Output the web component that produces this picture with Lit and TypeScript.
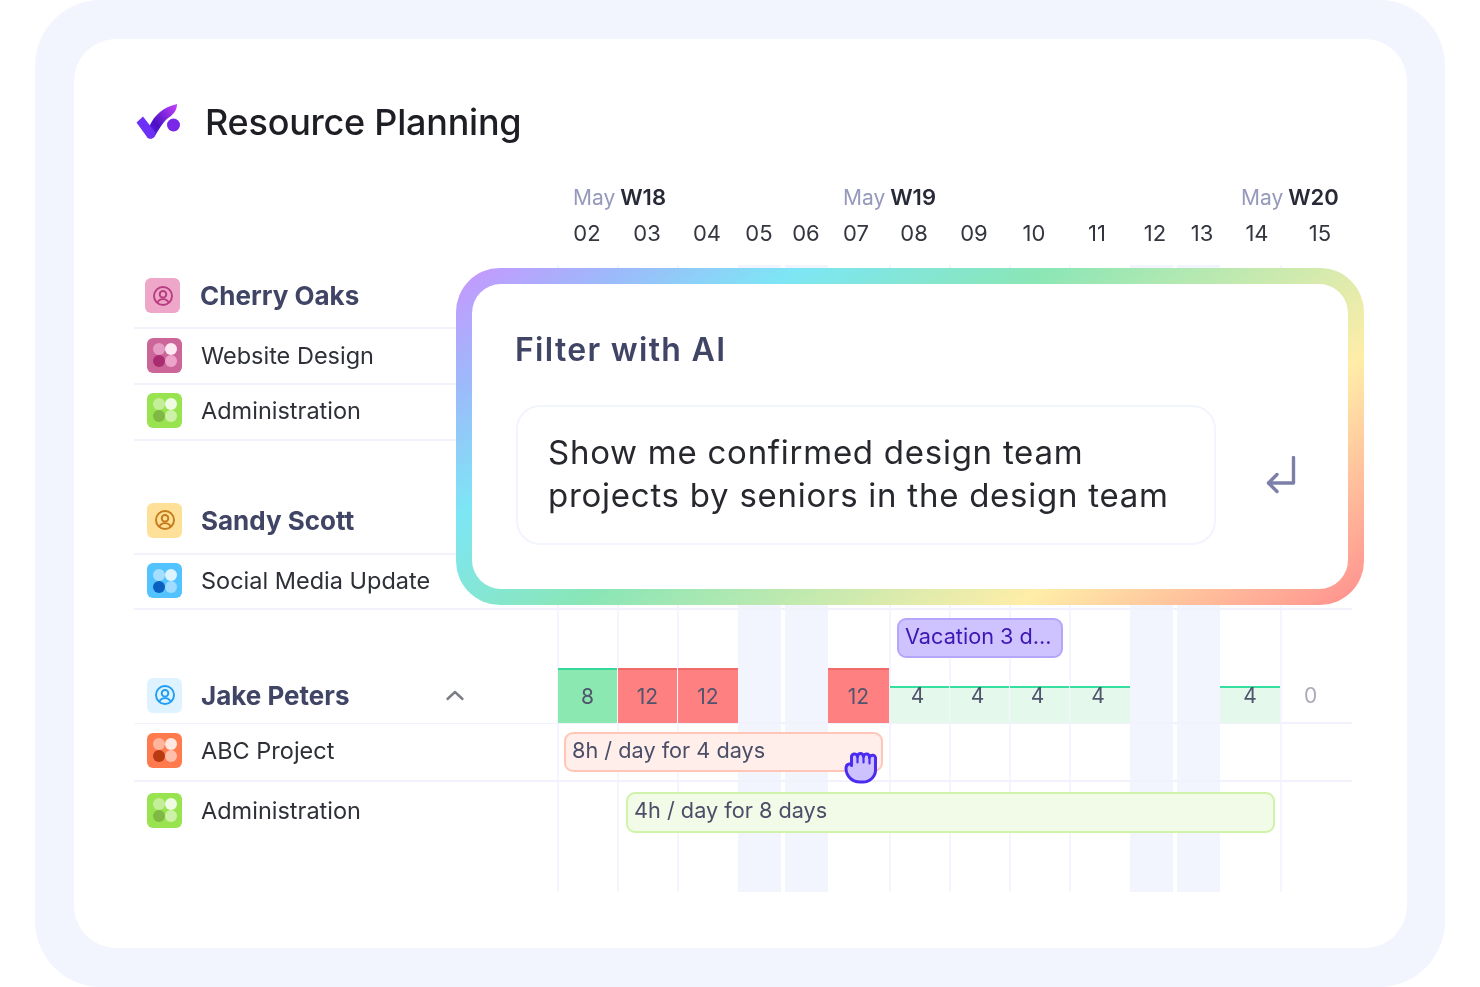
import { LitElement, html, css, svg } from "lit";
import { customElement } from "lit/decorators.js";

const dates: [string, number][] = [
  ["02", 60], ["03", 60], ["04", 60], ["05", 44], ["06", 50], ["07", 50], ["08", 66],
  ["09", 54], ["10", 66], ["11", 60], ["12", 56], ["13", 38], ["14", 72], ["15", 54],
];
const lineTracks = [2, 3, 4, 9, 10, 11, 12, 17];
const weekendTracks = [5, 7, 13, 15];

const person = (c: string) => html`<span class="ic person ${c}"><svg viewBox="0 0 24 24" width="24" height="24" fill="none" stroke="currentColor" stroke-width="1.9"><circle cx="12" cy="12" r="9"/><circle cx="12" cy="10.3" r="3.3"/><path d="M6.3 18.6c1.2-2.4 3.2-3.5 5.7-3.5s4.500 1.100 5.700 3.500"/></svg></span>`;
const project = (c: string) => html`<span class="ic project ${c}"><i></i><i></i><i></i><i></i></span>`;

const handPath = svg`<path d="M851.500 765.500V757.500a3 3 0 0 1 6-1a3 3 0 0 1 6 0a3 3 0 0 1 6 1a3 3 0 0 1 6 1.500V770a12.500 12 0 0 1-12.500 12h-3a14 13.500 0 0 1-14-13.500q0-4 3-4.500q2-.3 2.500.5z" fill="#CDC2FF" stroke="#4B2BF0" stroke-width="3" stroke-linejoin="round"/><path d="M857.500 756.500v6M863.500 756.500v6M869.500 757.500v6" fill="none" stroke="#4B2BF0" stroke-width="2.200" stroke-linecap="round"/>`;

@customElement("app-root")
export class AppRoot extends LitElement {
  static styles = css`
    :host { display: block; width: 1480px; height: 987px; overflow: hidden; background: #fff;
      font-family: Inter, "Liberation Sans", sans-serif;
      --tracks: 423px 60px 60px 61px 43px 4px 43px 61px 60px 60px 60px 61px 43px 4px 43px 60px 72px; }
    .frame { box-sizing: border-box; margin: 0 35px; height: 987px; padding: 39px 38px 39px 39px; background: #F2F4FE; border-radius: 66px; filter: blur(.35px); }
    .card { position: relative; box-sizing: border-box; height: 909px; background: #fff; border-radius: 42px; padding: 60px 55px 0 60px; }
    .title { display: flex; align-items: center; gap: 24px; height: 46px; padding-left: 1px; }
    .title svg { flex: none; }
    h1 { margin: 0; font-size: 36px; font-weight: 550; color: #1d1f24; letter-spacing: -0.24px; }
    .weeks { display: grid; grid-template-columns: var(--tracks); height: 37px; padding-bottom: 1px; margin-top: 33px; align-items: center; font-size: 21px; }
    .wk { white-space: nowrap; color: #9599BB; }
    .wk b { font-size: 22px; font-weight: 600; color: #272a36; margin-left: -1px; }
    .w18 { grid-column: 2 / span 4; padding-left: 16px; }
    .w19 { grid-column: 8 / span 4; padding-left: 15px; }
    .w20 { grid-column: 16 / span 2; padding-left: 21px; }
    .dates { display: flex; height: 34px; align-items: center; padding-left: 423px; font-size: 22px; color: #33363f; }
    .dates span { text-align: center; flex: none; }
    .body { display: grid; height: 627px; margin-top: 15px; }
    .cols, .rows { grid-area: 1 / 1; display: grid; grid-template-columns: var(--tracks); }
    .rows { display: block; }
    .col { grid-row: 1; }
    .line { border-left: 2px solid #F4F5FE; }
    .weekend { background: #F2F4FE; }
    .row { display: grid; grid-template-columns: var(--tracks); box-sizing: border-box; border-bottom: 2px solid #F1F2FC; position: relative; }
    .h64 { height: 64px; } .h56 { height: 56px; } .h55 { height: 55px; } .h58 { height: 58px; }
    .none { border-bottom: none; }
    .sp50 { height: 50px; }
    .label { grid-column: 1; grid-row: 1; display: flex; align-items: center; gap: 19px; padding: 0 0 2px 13px; font-size: 23.500px; color: #2e3038; white-space: nowrap; background: #fff; }
    .label.low1 { padding-bottom: 1px; }
    .label.up { padding-bottom: 4px; }
    .label.tight { padding-left: 11px; gap: 20px; }
    .label b { font-size: 26px; font-weight: 650; color: #404565; }
    .ic { flex: none; width: 35px; height: 35px; border-radius: 6px; box-sizing: border-box; }
    .person { display: flex; align-items: center; justify-content: center; }
    .p-pink { background: #EEA7C8; color: #B83C80; }
    .p-amber { background: #FFE099; color: #C67A18; }
    .p-blue { background: #DEF3FF; color: #1F9DF2; }
    .project { display: grid; grid-template-columns: 1fr 1fr; gap: 0; padding: 5.500px; }
    .project i { border-radius: 50%; }
    .c-rose { background: #CC6699; } .c-rose i:nth-child(1){background:#E59BC2} .c-rose i:nth-child(2){background:#FFEAF3} .c-rose i:nth-child(3){background:#A92B70} .c-rose i:nth-child(4){background:#EDA4CA}
    .c-green { background: #99E350; } .c-green i:nth-child(1){background:#C4EF9A} .c-green i:nth-child(2){background:#EFFBE2} .c-green i:nth-child(3){background:#7FB844} .c-green i:nth-child(4){background:#CDF2A7}
    .c-sky { background: #52C3FF; } .c-sky i:nth-child(1){background:#A5DFFF} .c-sky i:nth-child(2){background:#DDF3FF} .c-sky i:nth-child(3){background:#0A5FBF} .c-sky i:nth-child(4){background:#A0DCFF}
    .c-orange { background: #FF7A4D; } .c-orange i:nth-child(1){background:#FFB49C} .c-orange i:nth-child(2){background:#FFE8E0} .c-orange i:nth-child(3){background:#B83A10} .c-orange i:nth-child(4){background:#FFBFAA}
    .chev { margin-left: auto; margin-right: 92px; flex: none; }
    .cell { grid-row: 1; display: flex; align-items: center; justify-content: center; box-sizing: border-box; font-size: 21px; color: #50546c; margin-left: 1px; height: 55px; padding-bottom: 1px; }
    .ok { background: #8AE8B0; border-top: 2px solid #35D79A; }
    .over { background: #FF8080; border-top: 2px solid #F06A6A; }
    .over.flush { margin-left: 0; }
    .low { padding: 0 4px 0 0; background: linear-gradient(#fff0 18px, #35DFA0 18px, #35DFA0 20px, #E4F8EC 20px); }
    .low.tail { margin-left: 0; padding-right: 0; }
    .zero { color: #a9acb8; padding: 0 12px 0 0; }
    .pill { grid-row: 1; box-sizing: border-box; display: flex; align-items: center; height: 40px; border: 2px solid; border-radius: 9px; padding: 0 0 3px 6px; font-size: 21.700px; white-space: nowrap; color: #4a4e68; align-self: center; }
    .vac { grid-column: 9 / span 3; width: 166px; margin-left: 8px; background: #CFC3FF; border-color: #B6A6FB; color: #3D17B3; align-self: start; margin-top: 8px; padding-bottom: 4px; }
    .red { grid-column: 2 / span 7; margin: -1px 6px 0 7px; background: #FFEEEA; border-color: #FFC6B7; }
    .lime { grid-column: 3 / span 14; margin: 2px 5px 0 9px; background: #F1FBE7; border-color: #CFF3A8; height: 41px; padding-bottom: 4px; }
    .hand { position: absolute; left: 706px; top: 21px; }
    .panel { position: absolute; left: 382px; top: 229px; width: 908px; height: 337px; box-sizing: border-box; padding: 16px; border-radius: 44px;
      background: linear-gradient(144deg, #C995FF 0%, #9DB9FA 12%, #7DE6F5 25%, #8AE6B6 43%, #FFEDA8 75%, #FF8E8E 100%); }
    .inner { box-sizing: border-box; height: 100%; background: #fff; border-radius: 29px; padding: 43px 0 0 43px; }
    h2 { margin: 0; font-size: 32px; line-height: 46px; font-weight: 600; color: #404565; letter-spacing: 1.300px; }
    .ask { display: flex; align-items: center; gap: 50px; margin: 32px 0 0 1px; }
    .box { box-sizing: border-box; width: 700px; height: 140px; border: 2px solid #F2F4FE; border-radius: 24px; padding: 0 0 2px 30px; display: flex; align-items: center; font-size: 33px; line-height: 43.500px; color: #26282e; letter-spacing: 0.74px; white-space: pre-line; }
    .ret { flex: none; }
  `;

  render() {
    return html`
      <div class="frame">
        <div class="card">
          <div class="title">
            <svg width="46" height="38" viewBox="135 103 46 38">
              <defs>
                <linearGradient id="lg" x1="140" y1="136" x2="178" y2="104" gradientUnits="userSpaceOnUse">
                  <stop offset="0" stop-color="#6A2DFB"/><stop offset=".4" stop-color="#4B10C4"/><stop offset="1" stop-color="#C945FF"/>
                </linearGradient>
              </defs>
              <path d="M150 125C154 116 163 107 177 104C177 110 174 113 171 116C164 120 159 129 155 136C153 139 149 139.500 147 137Z" fill="url(#lg)"/>
              <path d="M136.500 122.500L143 116.500L155 132L155 136C153 139 149 139.500 147 137Z" fill="#6D30F6"/>
              <circle cx="173.500" cy="125" r="6.500" fill="#7A28E8"/>
            </svg>
            <h1>Resource Planning</h1>
          </div>
          <div class="weeks">
            <div class="wk w18">May <b>W18</b></div>
            <div class="wk w19">May <b>W19</b></div>
            <div class="wk w20">May <b>W20</b></div>
          </div>
          <div class="dates">
            ${dates.map(([d, w]) => html`<span style="width:${w}px">${d}</span>`)}
          </div>
          <div class="body">
            <div class="cols">
              ${lineTracks.map((t) => html`<div class="col line" style="grid-column:${t}"></div>`)}
              ${weekendTracks.map((t) => html`<div class="col weekend" style="grid-column:${t}"></div>`)}
            </div>
            <div class="rows">
              <div class="row h64"><div class="label tight low1">${person("p-pink")}<b>Cherry Oaks</b></div></div>
              <div class="row h56"><div class="label">${project("c-rose")}Website Design</div></div>
              <div class="row h56"><div class="label up">${project("c-green")}Administration</div></div>
              <div class="sp50"></div>
              <div class="row h64"><div class="label up">${person("p-amber")}<b>Sandy Scott</b></div></div>
              <div class="row h55"><div class="label">${project("c-sky")}Social Media Update</div></div>
              <div class="row h58 none"><div class="pill vac">Vacation 3 d...</div></div>
              <div class="row h56">
                <div class="label low1">${person("p-blue")}<b>Jake Peters</b>
                  <svg class="chev" width="20" height="12" viewBox="0 0 20 12" fill="none" stroke="#7b7d85" stroke-width="2.400" stroke-linecap="round" stroke-linejoin="round"><path d="M2.500 10L10 3l7.500 7"/></svg>
                </div>
                <div class="cell ok" style="grid-column:2">8</div>
                <div class="cell over" style="grid-column:3">12</div>
                <div class="cell over" style="grid-column:4">12</div>
                <div class="cell over flush" style="grid-column:8">12</div>
                ${[9, 10, 11, 12].map((c) => html`<div class="cell low" style="grid-column:${c}">4</div>`)}
                <div class="cell low tail" style="grid-column:16">4</div>
                <div class="cell zero" style="grid-column:17">0</div>
              </div>
              <div class="row h58">
                <div class="label up">${project("c-orange")}ABC Project</div>
                <div class="pill red">8h / day for 4 days</div>
                <svg class="hand" width="40" height="42" viewBox="840 745 40 42">${handPath}</svg>
              </div>
              <div class="row h58 none">
                <div class="label">${project("c-green")}Administration</div>
                <div class="pill lime">4h / day for 8 days</div>
              </div>
            </div>
          </div>
          <div class="panel">
            <div class="inner">
              <h2>Filter with AI</h2>
              <div class="ask">
                <div class="box">Show me confirmed design team
projects by seniors in the design team</div>
                <svg class="ret" width="30" height="38" viewBox="0 0 30 38" fill="none" stroke="#7C80A8" stroke-width="3.400" stroke-linecap="round" stroke-linejoin="round"><path d="M27.500 1.500V27H2.500"/><path d="M11 18.500L2.500 27L11 35.500"/></svg>
              </div>
            </div>
          </div>
        </div>
      </div>
    `;
  }
}
